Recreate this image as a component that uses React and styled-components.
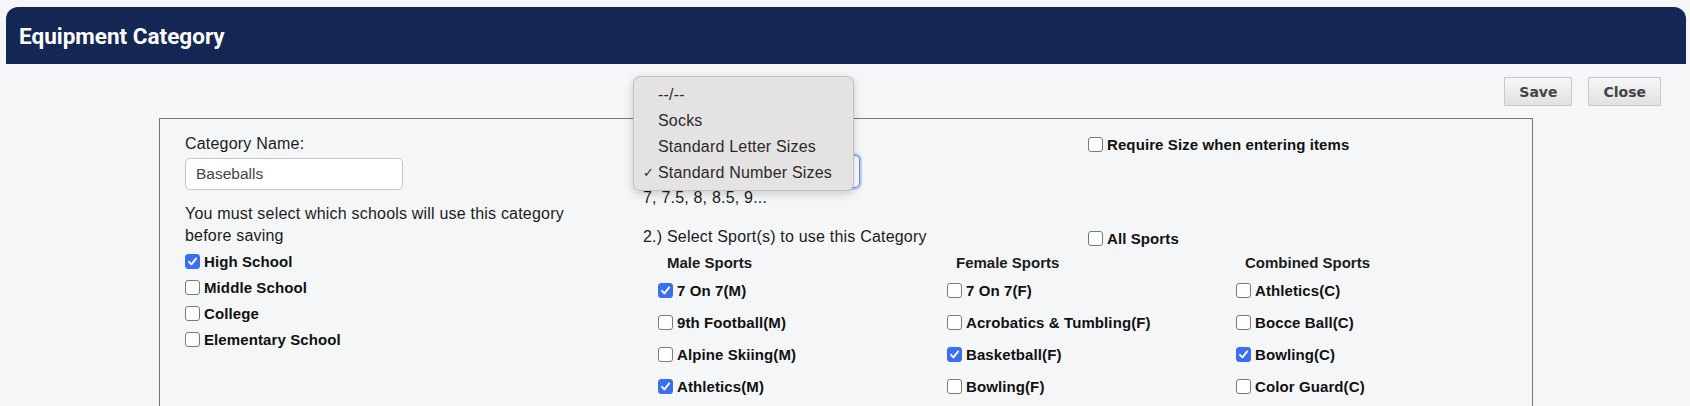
import React from 'react';
import styled, { createGlobalStyle } from 'styled-components';

const GlobalStyle = createGlobalStyle`
  html, body {
    margin: 0;
    padding: 0;
    overflow: hidden;
    background: #f5f6f8;
  }
  body {
    font-family: 'Liberation Sans', Arial, sans-serif;
    color: #1b1b1b;
  }
`;

const Page = styled.div`
  width: 1690px;
  min-height: 406px;
`;

const Header = styled.div`
  margin: 7px 4px 0 6px;
  height: 57px;
  background: #152754;
  border-radius: 12px 12px 0 0;
  display: flex;
  align-items: center;
  padding-left: 13px;
`;

const Title = styled.h1`
  margin: 0;
  font-family: Roboto, 'Liberation Sans', sans-serif;
  font-weight: 700;
  font-size: 22.5px;
  color: #fff;
`;

const Toolbar = styled.div`
  display: flex;
  justify-content: flex-end;
  gap: 16px;
  padding: 13px 29px 0 0;
`;

const Button = styled.button`
  height: 29px;
  padding: 0 14px;
  border: 1px solid #c9c9c9;
  background: linear-gradient(#f6f6f6, #e1e1e1);
  font-family: 'DejaVu Sans', Verdana, sans-serif;
  font-weight: 700;
  font-size: 14px;
  color: #444;
  cursor: pointer;
`;

const Box = styled.div`
  margin: 12px 0 0 159px;
  width: 1374px;
  min-height: 420px;
  box-sizing: border-box;
  border: 1px solid #777;
  padding: 13px 0 0 25px;
  display: flex;
`;

const LeftCol = styled.div`
  width: 458px;
  flex-shrink: 0;
  padding-top: 2px;
`;

const Text = styled.div`
  font-size: 16px;
  letter-spacing: 0.2px;
  line-height: ${({ $lh }) => $lh || 20}px;
  margin-top: ${({ $mt }) => $mt || 0}px;
`;

const Input = styled.div`
  margin-top: 4px;
  width: 218px;
  height: 32px;
  box-sizing: border-box;
  border: 1px solid #c6c6c6;
  border-radius: 5px;
  background: #fff;
  padding: 0 10px;
  display: flex;
  align-items: center;
  font-size: 15.5px;
  color: #444;
`;

const SchoolList = styled.div`
  margin-top: 1px;
  display: flex;
  flex-direction: column;
`;

const CheckRow = styled.label`
  display: flex;
  align-items: center;
  height: ${({ $h }) => $h || 26}px;
  font-size: 15px;
  letter-spacing: 0.1px;
  font-weight: 700;
  color: #111;
  white-space: nowrap;
`;

const Box14 = styled.span`
  width: 15px;
  height: 15px;
  box-sizing: border-box;
  border-radius: 3px;
  margin-right: 4px;
  flex-shrink: 0;
  display: inline-flex;
  align-items: center;
  justify-content: center;
  background: ${({ $checked }) => ($checked ? '#3b6ef2' : '#fff')};
  border: 1px solid ${({ $checked }) => ($checked ? '#3b6ef2' : '#7a7a7a')};
`;

const Checkbox = ({ checked, label, h }) => (
  <CheckRow $h={h}>
    <Box14 $checked={checked}>
      {checked && (
        <svg width="11" height="11" viewBox="0 0 11 11">
          <path d="M2 5.8 L4.4 8.3 L9.2 2.4" fill="none" stroke="#fff" strokeWidth="1.9" strokeLinecap="round" strokeLinejoin="round" />
        </svg>
      )}
    </Box14>
    {label}
  </CheckRow>
);

const MainCol = styled.div`
  flex: 1;
  display: grid;
  grid-template-columns: 445px 1fr;
  align-content: start;
`;

const SizeBlock = styled.div`
  position: relative;
`;

const Select = styled.div`
  margin-top: 3px;
  width: 217px;
  height: 33px;
  box-sizing: border-box;
  border: 1px solid #5a8ff0;
  border-radius: 5px;
  background: #fff;
  box-shadow: 0 0 0 2px rgba(90, 140, 240, 0.35);
  display: flex;
  align-items: center;
  justify-content: space-between;
  padding: 0 8px;
  font-size: 15px;
`;

const Popup = styled.div`
  position: absolute;
  top: -56px;
  left: -10px;
  z-index: 10;
  width: 221px;
  height: 115px;
  box-sizing: border-box;
  padding: 5px 0 0;
  background: #e4e2e3;
  border: 1px solid rgba(0, 0, 0, 0.14);
  border-radius: 7px;
  box-shadow: 0 3px 10px rgba(0, 0, 0, 0.18);
`;

const PopupItem = styled.div`
  position: relative;
  height: 26px;
  line-height: 26px;
  padding-left: 24px;
  font-size: 16px;
  letter-spacing: 0.2px;
  color: #2a2a2a;
`;

const Tick = styled.span`
  position: absolute;
  left: 9px;
  top: 0;
  font-size: 13px;
`;

const SideCheck = styled.div`
  margin-top: ${({ $mt }) => $mt}px;
`;

const SportsGrid = styled.div`
  grid-column: 1 / -1;
  margin-top: 5px;
  padding-left: 15px;
  display: grid;
  grid-template-columns: 289px 289px 289px;
`;

const SportHead = styled.div`
  height: 20px;
  line-height: 20px;
  padding-left: 9px;
  font-size: 15px;
  font-weight: 700;
  margin-bottom: 1px;
`;

const sizes = ['--/--', 'Socks', 'Standard Letter Sizes', 'Standard Number Sizes'];

const sports = [
  {
    head: 'Male Sports',
    items: [
      ['7 On 7(M)', true],
      ['9th Football(M)', false],
      ['Alpine Skiing(M)', false],
      ['Athletics(M)', true],
      ['Badminton(M)', false],
      ['Baseball(M)', true],
    ],
  },
  {
    head: 'Female Sports',
    items: [
      ['7 On 7(F)', false],
      ['Acrobatics & Tumbling(F)', false],
      ['Basketball(F)', true],
      ['Bowling(F)', false],
      ['Cheerleading(F)', false],
      ['Cross Country(F)', false],
    ],
  },
  {
    head: 'Combined Sports',
    items: [
      ['Athletics(C)', false],
      ['Bocce Ball(C)', false],
      ['Bowling(C)', true],
      ['Color Guard(C)', false],
      ['Dance(C)', false],
      ['Esports(C)', false],
    ],
  },
];

export default function App() {
  return (
    <Page>
      <GlobalStyle />
      <Header>
        <Title>Equipment Category</Title>
      </Header>
      <Toolbar>
        <Button>Save</Button>
        <Button>Close</Button>
      </Toolbar>
      <Box>
        <LeftCol>
          <Text>Category Name:</Text>
          <Input>Baseballs</Input>
          <Text $lh={22} $mt={13}>
            You must select which schools will use this category
            <br />
            before saving
          </Text>
          <SchoolList>
            <Checkbox checked label="High School" />
            <Checkbox label="Middle School" />
            <Checkbox label="College" />
            <Checkbox label="Elementary School" />
          </SchoolList>
        </LeftCol>
        <MainCol>
          <SizeBlock>
            <Text>1.) Select Size Type:</Text>
            <Select>
              Standard Number Sizes
              <span>⌄</span>
            </Select>
            <Text $mt={0}>7, 7.5, 8, 8.5, 9...</Text>
            <Popup>
              {sizes.map((s, i) => (
                <PopupItem key={s}>
                  {i === sizes.length - 1 && <Tick>✓</Tick>}
                  {s}
                </PopupItem>
              ))}
            </Popup>
          </SizeBlock>
          <SideCheck $mt={2}>
            <Checkbox label="Require Size when entering items" h={20} />
          </SideCheck>
          <Text $mt={19}>2.) Select Sport(s) to use this Category</Text>
          <SideCheck $mt={20}>
            <Checkbox label="All Sports" h={20} />
          </SideCheck>
          <SportsGrid>
            {sports.map((col) => (
              <div key={col.head}>
                <SportHead>{col.head}</SportHead>
                {col.items.map(([name, on]) => (
                  <Checkbox key={name} label={name} checked={on} h={32} />
                ))}
              </div>
            ))}
          </SportsGrid>
        </MainCol>
      </Box>
    </Page>
  );
}
